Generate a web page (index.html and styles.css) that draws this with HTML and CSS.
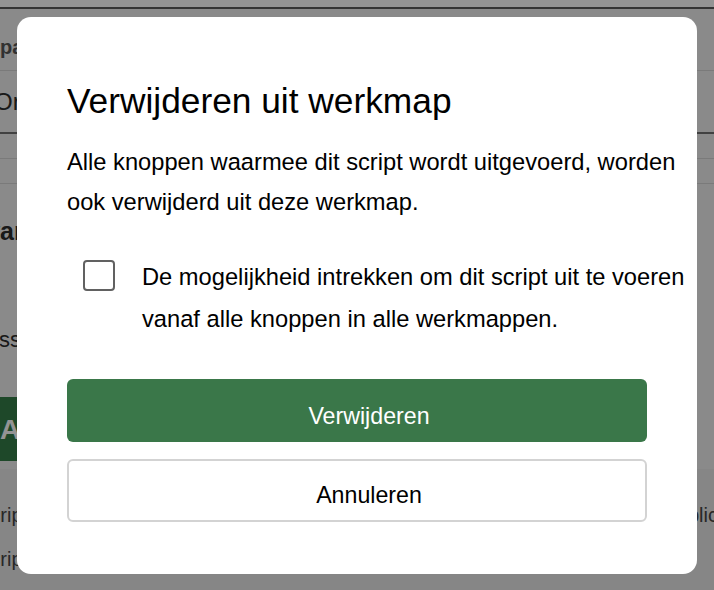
FILE: index.html
```html
<!DOCTYPE html>
<html lang="nl">
<head>
<meta charset="utf-8">
<title>Verwijderen uit werkmap</title>
<link rel="stylesheet" href="styles.css">
</head>
<body>
  <div class="page">
    <div class="topbar"></div>
    <div class="row row-tabs"><span class="tab-label">pa</span></div>
    <div class="row row-title"><span class="title-label">Or</span></div>
    <div class="row row-thin"></div>
    <div class="row row-thin"></div>
    <section class="details">
      <div class="details-heading">Software</div>
      <div class="details-text">ss</div>
      <div class="action-btn">Ac</div>
      <div class="list">
        <div class="list-row"><span class="list-left">Script</span><span class="list-right">Publiceren</span></div>
        <div class="list-row"><span class="list-left">Script</span></div>
      </div>
    </section>
  </div>

  <div class="overlay">
    <div class="dialog" role="dialog" aria-labelledby="dlg-title">
      <h2 class="dialog-title" id="dlg-title">Verwijderen uit werkmap</h2>
      <p class="dialog-body">Alle knoppen waarmee dit script wordt uitgevoerd, worden ook verwijderd uit deze werkmap.</p>
      <label class="check-row">
        <input type="checkbox" class="check-box">
        <span class="check-label">De mogelijkheid intrekken om dit script uit te voeren vanaf alle knoppen in alle werkmappen.</span>
      </label>
      <div class="btn btn-primary">Verwijderen</div>
      <div class="btn btn-secondary">Annuleren</div>
    </div>
  </div>
</body>
</html>
```

FILE: styles.css
```css
html, body {
  margin: 0;
  padding: 0;
}

body {
  width: 714px;
  height: 590px;
  overflow: hidden;
  font-family: "Liberation Sans", Arial, sans-serif;
  color: #000;
}

/* ---------- background application ---------- */
.page {
  height: 590px;
  background: #eeeeee;
  overflow: hidden;
  color: #2b2b2b;
}

.topbar {
  height: 7px;
  background: #ffffff;
  border-bottom: 2px solid #5a5a5a;
}

.row {
  border-bottom: 1px solid #d2d2d2;
  box-sizing: border-box;
}

.row-tabs {
  height: 62px;
  padding-top: 26px;
  font-size: 20px;
  line-height: 24px;
  font-weight: 700;
  color: #555;
}

.row-title {
  height: 63px;
  padding-top: 17px;
  font-size: 24px;
  line-height: 28px;
  border-bottom: 2px solid #707070;
}

.title-label {
  margin-left: -6px;
}

.row-thin {
  height: 25px;
}

.details {
  display: flex;
  flex-direction: column;
}

.details-heading {
  margin-top: 32px;
  font-size: 25px;
  line-height: 30px;
  font-weight: 700;
  margin-left: -68px;
}

.details-text {
  margin-top: 81px;
  font-size: 22px;
  line-height: 26px;
  margin-left: -1px;
}

.action-btn {
  margin-top: 44px;
  margin-left: -20px;
  width: 200px;
  height: 64px;
  box-sizing: border-box;
  padding: 17px 0 0 20px;
  background: #347d48;
  color: #fff;
  font-size: 28px;
  line-height: 32px;
  font-weight: 700;
}

.list {
  margin-top: 8px;
  padding-top: 34px;
  background: #e7e7e7;
  height: 200px;
}

.list-row {
  display: flex;
  justify-content: space-between;
  height: 44px;
  font-size: 20px;
  line-height: 24px;
  color: #444;
}

.list-left {
  margin-left: -23px;
}

.list-right {
  margin-right: -44px;
}

/* ---------- modal ---------- */
.overlay {
  position: fixed;
  inset: 0;
  background: rgba(0, 0, 0, 0.42);
  display: flex;
  align-items: center;
  justify-content: center;
}

.dialog {
  width: 680px;
  height: 557px;
  box-sizing: border-box;
  padding: 64px 0 0 50px;
  background: #fff;
  border-radius: 14px;
  display: flex;
  flex-direction: column;
}

.dialog-title {
  margin: 0;
  font-size: 35.3px;
  line-height: 40px;
  font-weight: 400;
  color: #000;
}

.dialog-body {
  margin: 22.9px 0 0 0;
  font-size: 23.7px;
  line-height: 39.3px;
}

.check-row {
  display: flex;
  align-items: flex-start;
  margin-top: 35.3px;
}

.check-box {
  appearance: none;
  -webkit-appearance: none;
  flex: none;
  width: 32px;
  height: 31px;
  margin: 3px 0 0 16px;
  box-sizing: border-box;
  border: 2px solid #616161;
  border-radius: 4px;
  background: #fff;
}

.check-label {
  margin-left: 27px;
  font-size: 23.7px;
  line-height: 41.6px;
}

.btn {
  width: 580px;
  height: 63px;
  box-sizing: border-box;
  border-radius: 6px;
  padding-left: 24px;
  text-align: center;
  font-size: 23.2px;
  line-height: 27px;
}

.btn-primary {
  margin-top: 39px;
  padding-top: 24px;
  background: #3a7749;
  color: #fff;
}

.btn-secondary {
  margin-top: 17px;
  padding-top: 21px;
  border: 2px solid #d3d3d3;
  color: #000;
  background: #fff;
}
```
